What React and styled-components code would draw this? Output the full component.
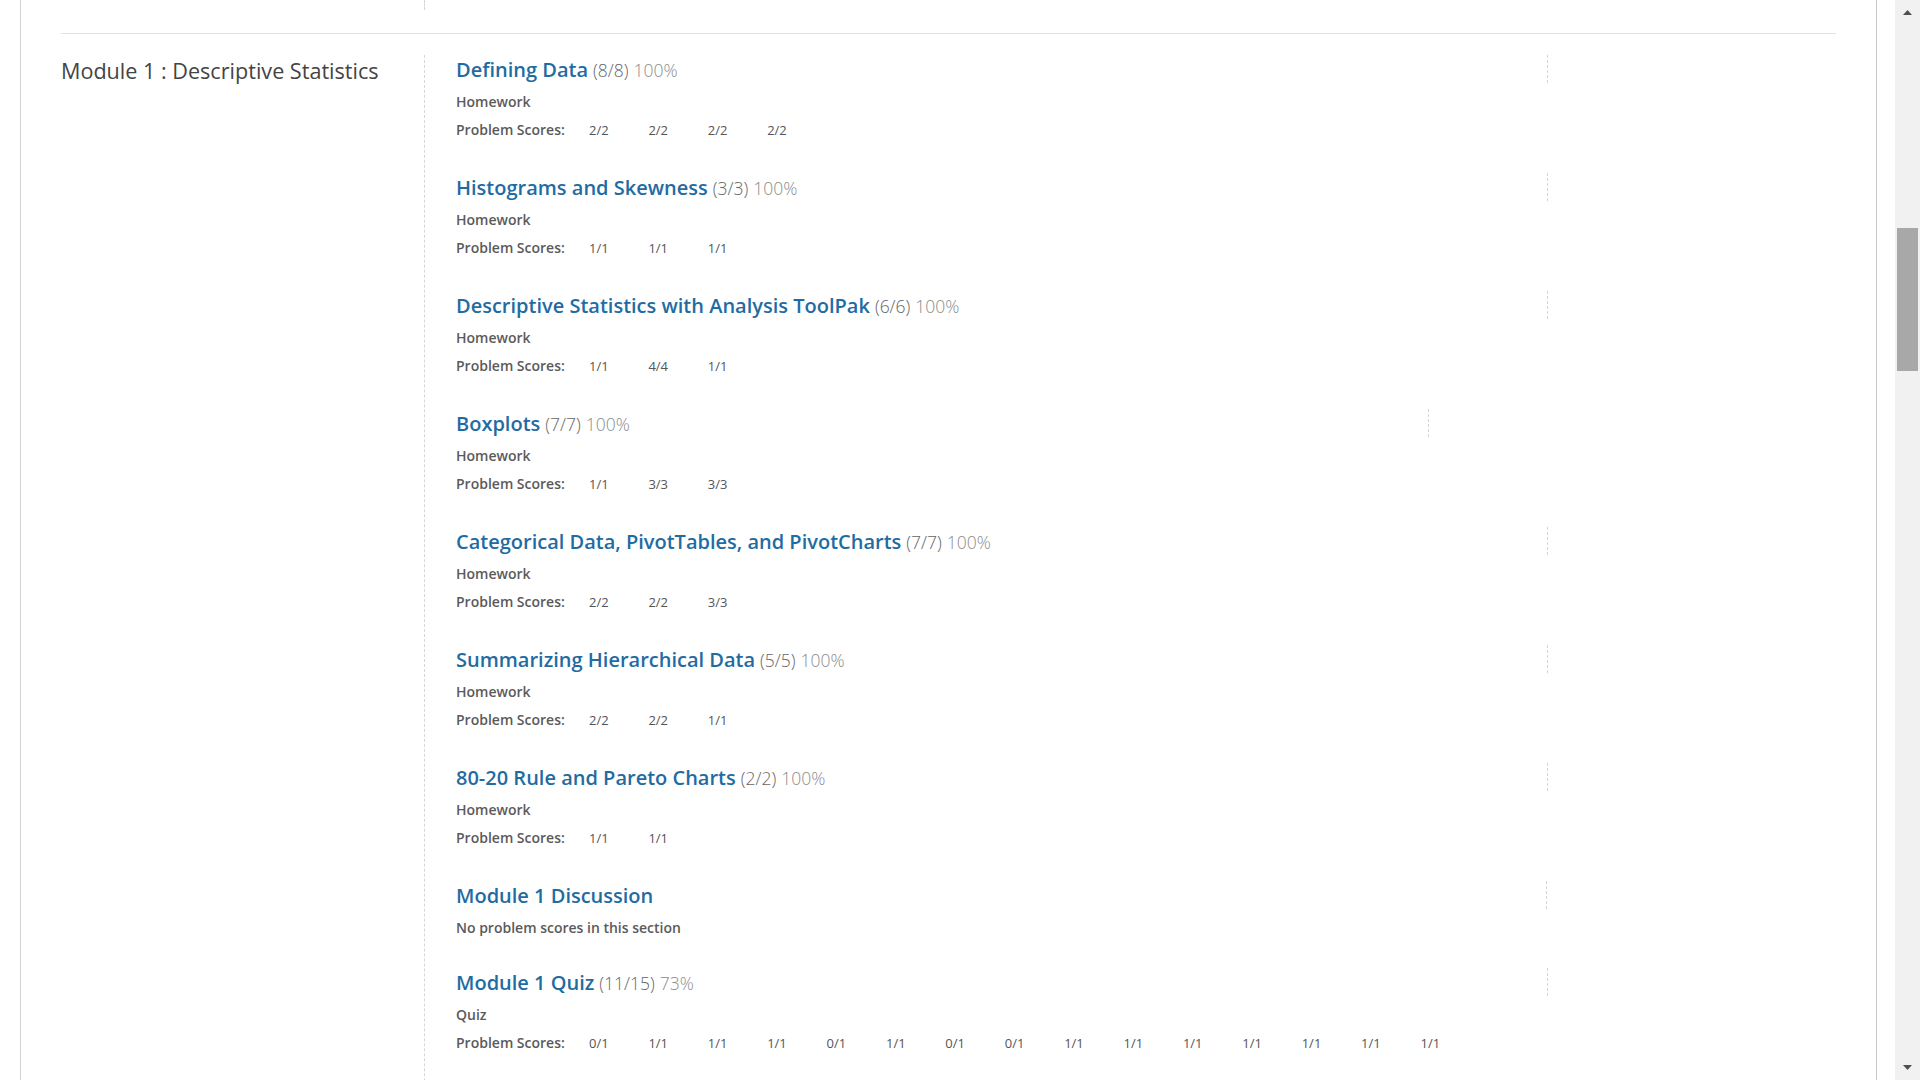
import React from 'react';
import styled, { createGlobalStyle } from 'styled-components';

const Global = createGlobalStyle`
  html, body { margin: 0; padding: 0; background: #fff; overflow: hidden; }
  body { font-family: "Open Sans", "Noto Sans", "Liberation Sans", sans-serif; }
`;

const Screen = styled.div`
  display: flex;
  width: 1920px;
  height: 1080px;
  overflow: hidden;
  background: #fff;
`;

const Viewport = styled.div`
  flex: 1;
  display: flex;
  padding: 0 18px 0 20px;
  min-width: 0;
`;

const Panel = styled.div`
  flex: 1;
  border-left: 1px solid #d2d2d2;
  border-right: 1px solid #c8c8c8;
  padding: 0 40px;
  overflow: hidden;
`;

const PrevTail = styled.div`
  display: grid;
  grid-template-columns: 363px 1fr;
  padding-bottom: 23px;
`;

const TailLine = styled.div`
  height: 10px;
  border-left: 1px dashed #d6d6d6;
`;

const Module = styled.section`
  display: grid;
  grid-template-columns: 363px 1fr;
  border-top: 1px solid #e2e2e2;
  padding-top: 21px;
`;

const ModuleTitle = styled.h2`
  margin: 2px 0 0;
  font-size: 21.6px;
  line-height: 28px;
  font-weight: 400;
  color: #444;
`;

const ItemsColumn = styled.div`
  border-left: 1px dashed #d6d6d6;
  padding: 0 0 200px 31px;
`;

const Item = styled.div`
  padding-bottom: ${p => (p.$compact ? 30 : 33)}px;
`;

const TitleRow = styled.div`
  display: flex;
  height: 28px;
`;

const TitleCell = styled.div`
  width: ${p => p.$w}px;
  flex-shrink: 0;
  white-space: nowrap;
  line-height: 30px;
`;

const Mark = styled.div`
  height: 28px;
  border-left: 1px dashed #d4d4d4;
`;

const TitleLink = styled.a`
  color: #1f6ca3;
  font-size: 20px;
  font-weight: 600;
  text-decoration: none;
`;

const Stat = styled.span`
  color: ${p => (p.$soft ? '#8c8c8c' : '#666')};
  font-size: 17.5px;
  font-weight: 300;
  margin-left: 5px;
`;

const Kind = styled.div`
  margin-top: 9px;
  font-size: 14px;
  line-height: 20px;
  font-weight: 600;
  color: #5a5a5a;
`;

const Scores = styled.div`
  margin-top: 8px;
  display: flex;
  font-size: 13px;
  line-height: 20px;
  color: #555;
`;

const ScoreLabel = styled.div`
  width: 133px;
  flex-shrink: 0;
  font-size: 14px;
  font-weight: 600;
  color: #5a5a5a;
`;

const Score = styled.div`
  width: 59.4px;
  flex-shrink: 0;
`;

const ScrollBar = styled.div`
  width: 25px;
  display: flex;
  flex-direction: column;
  background: #f1f1f1;
`;

const Arrow = styled.div`
  height: 25px;
  display: flex;
  align-items: center;
  justify-content: center;
`;

const Track = styled.div`
  flex: 1;
  padding: 0 2px;
`;

const Thumb = styled.div`
  margin-top: ${p => p.$top}px;
  height: ${p => p.$h}px;
  background: #a8a8a8;
`;

const items = [
  { title: 'Defining Data', count: '(8/8)', pct: '100%', kind: 'Homework', scores: ['2/2', '2/2', '2/2', '2/2'] },
  { title: 'Histograms and Skewness', count: '(3/3)', pct: '100%', kind: 'Homework', scores: ['1/1', '1/1', '1/1'] },
  { title: 'Descriptive Statistics with Analysis ToolPak', count: '(6/6)', pct: '100%', kind: 'Homework', scores: ['1/1', '4/4', '1/1'] },
  { title: 'Boxplots', count: '(7/7)', pct: '100%', kind: 'Homework', scores: ['1/1', '3/3', '3/3'], mark: 972 },
  { title: 'Categorical Data, PivotTables, and PivotCharts', count: '(7/7)', pct: '100%', kind: 'Homework', scores: ['2/2', '2/2', '3/3'] },
  { title: 'Summarizing Hierarchical Data', count: '(5/5)', pct: '100%', kind: 'Homework', scores: ['2/2', '2/2', '1/1'] },
  { title: '80-20 Rule and Pareto Charts', count: '(2/2)', pct: '100%', kind: 'Homework', scores: ['1/1', '1/1'] },
  { title: 'Module 1 Discussion', none: true, mark: 1090 },
  {
    title: 'Module 1 Quiz', count: '(11/15)', pct: '73%', kind: 'Quiz',
    scores: ['0/1', '1/1', '1/1', '1/1', '0/1', '1/1', '0/1', '0/1', '1/1', '1/1', '1/1', '1/1', '1/1', '1/1', '1/1'],
  },
];

function Triangle({ up }) {
  return (
    <svg width="9" height="5" viewBox="0 0 9 5">
      <path d={up ? 'M0 5 L4.5 0 L9 5 Z' : 'M0 0 L4.5 5 L9 0 Z'} fill="#505050" />
    </svg>
  );
}

export default function App() {
  return (
    <Screen>
      <Global />
      <Viewport>
        <Panel>
          <PrevTail>
            <div />
            <TailLine />
          </PrevTail>
          <Module>
            <ModuleTitle>Module 1 : Descriptive Statistics</ModuleTitle>
            <ItemsColumn>
              {items.map(it => (
                <Item key={it.title} $compact={it.none}>
                  <TitleRow>
                    <TitleCell $w={it.mark || 1091}>
                      <TitleLink href="#">{it.title}</TitleLink>
                      {it.count && <Stat>{it.count}</Stat>}
                      {it.pct && <Stat $soft>{it.pct}</Stat>}
                    </TitleCell>
                    <Mark />
                  </TitleRow>
                  {it.none ? (
                    <Kind>No problem scores in this section</Kind>
                  ) : (
                    <>
                      <Kind>{it.kind}</Kind>
                      <Scores>
                        <ScoreLabel>Problem Scores:</ScoreLabel>
                        {it.scores.map((s, i) => (
                          <Score key={i}>{s}</Score>
                        ))}
                      </Scores>
                    </>
                  )}
                </Item>
              ))}
            </ItemsColumn>
          </Module>
        </Panel>
      </Viewport>
      <ScrollBar>
        <Arrow><Triangle up /></Arrow>
        <Track>
          <Thumb $top={203} $h={143} />
        </Track>
        <Arrow><Triangle /></Arrow>
      </ScrollBar>
    </Screen>
  );
}
